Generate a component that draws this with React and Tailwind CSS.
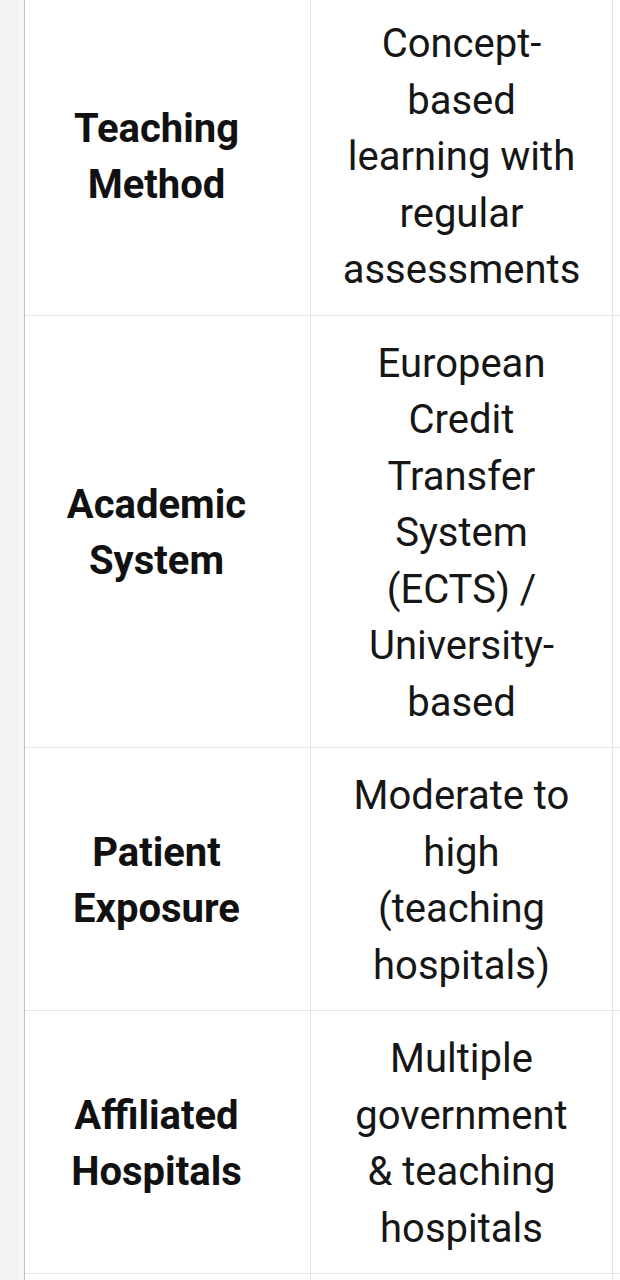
import React from "react";

const rows = [
    {
        label: ["Teaching", "Method"],
        value: ["Concept-", "based", "learning with", "regular", "assessments"],
    },
    {
        label: ["Academic", "System"],
        value: ["European", "Credit", "Transfer", "System", "(ECTS) /", "University-", "based"],
    },
    {
        label: ["Patient", "Exposure"],
        value: ["Moderate to", "high", "(teaching", "hospitals)"],
    },
    {
        label: ["Affiliated", "Hospitals"],
        value: ["Multiple", "government", "& teaching", "hospitals"],
    },
];

function Row({ row, first }) {
    return (
        <div className={"flex border-b border-[#e6e6e6]" + (first ? " -mt-[4px]" : "")}>
            <div className="w-[286px] shrink-0 flex items-center justify-center pr-[22px] pt-[20px] pb-[16px] border-r border-[#e6e6e6]">
                <p className="text-center font-bold text-[#111]">
                    {row.label.map((l) => (
                        <span key={l} className="block">{l}</span>
                    ))}
                </p>
            </div>
            <div className="w-[302px] shrink-0 flex items-center justify-center pt-[20px] pb-[16px] border-r border-[#e6e6e6]">
                <p className="text-center text-[#161616]">
                    {row.value.map((v) => (
                        <span key={v} className="block">{v}</span>
                    ))}
                </p>
            </div>
            <div className="w-[300px] shrink-0" />
        </div>
    );
}

export default function App() {
    return (
        <div className="flex min-h-[1280px] bg-white font-['Roboto',sans-serif] text-[40px] leading-[56.5px]">
            <div className="w-[25px] shrink-0 flex">
                <div className="w-[18px] bg-[#f2f2f2]" />
                <div className="w-[6px] bg-[#f4f6f8]" />
                <div className="w-[1px] bg-[#b8c2cc]" />
            </div>
            <div className="flex-1 overflow-hidden">
                <div className="w-[900px]">
                    {rows.map((row, i) => (
                        <Row key={i} row={row} first={i === 0} />
                    ))}
                    <div className="flex h-[40px]">
                        <div className="w-[286px] shrink-0 border-r border-[#e6e6e6]" />
                        <div className="w-[302px] shrink-0 border-r border-[#e6e6e6]" />
                    </div>
                </div>
            </div>
        </div>
    );
}
